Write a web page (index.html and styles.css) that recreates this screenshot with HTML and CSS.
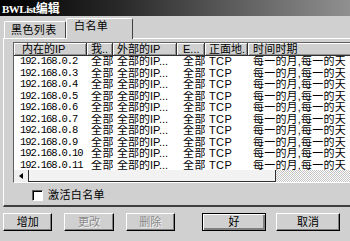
FILE: index.html
```html
<!DOCTYPE html>
<html>
<head>
	<title>BWList编辑</title>
	<link rel="stylesheet" href="styles.css">
</head>
<body>
	<div class="window">
		<div class="titlebar"><span class="latin">BWList</span>编辑</div>

		<div class="tabs">
			<div class="tab">黑色列表</div>
			<div class="tab active">白名单</div>
		</div>

		<div class="panel">
			<div class="list">
				<div class="row head">
					<div class="c1">内在的IP</div>
					<div class="c2">我..</div>
					<div class="c3">外部的IP</div>
					<div class="c4">E...</div>
					<div class="c5">正面地.</div>
					<div class="c6">时间时期</div>
				</div>
				<div class="rows">
					<div class="row"><div class="c1">192.168.0.2</div><div class="c2">全部</div><div class="c3">全部的IP...</div><div class="c4">全部</div><div class="c5">TCP</div><div class="c6">每一的月,每一的天</div></div>
					<div class="row"><div class="c1">192.168.0.3</div><div class="c2">全部</div><div class="c3">全部的IP...</div><div class="c4">全部</div><div class="c5">TCP</div><div class="c6">每一的月,每一的天</div></div>
					<div class="row"><div class="c1">192.168.0.4</div><div class="c2">全部</div><div class="c3">全部的IP...</div><div class="c4">全部</div><div class="c5">TCP</div><div class="c6">每一的月,每一的天</div></div>
					<div class="row"><div class="c1">192.168.0.5</div><div class="c2">全部</div><div class="c3">全部的IP...</div><div class="c4">全部</div><div class="c5">TCP</div><div class="c6">每一的月,每一的天</div></div>
					<div class="row"><div class="c1">192.168.0.6</div><div class="c2">全部</div><div class="c3">全部的IP...</div><div class="c4">全部</div><div class="c5">TCP</div><div class="c6">每一的月,每一的天</div></div>
					<div class="row"><div class="c1">192.168.0.7</div><div class="c2">全部</div><div class="c3">全部的IP...</div><div class="c4">全部</div><div class="c5">TCP</div><div class="c6">每一的月,每一的天</div></div>
					<div class="row"><div class="c1">192.168.0.8</div><div class="c2">全部</div><div class="c3">全部的IP...</div><div class="c4">全部</div><div class="c5">TCP</div><div class="c6">每一的月,每一的天</div></div>
					<div class="row"><div class="c1">192.168.0.9</div><div class="c2">全部</div><div class="c3">全部的IP...</div><div class="c4">全部</div><div class="c5">TCP</div><div class="c6">每一的月,每一的天</div></div>
					<div class="row"><div class="c1">192.168.0.10</div><div class="c2">全部</div><div class="c3">全部的IP...</div><div class="c4">全部</div><div class="c5">TCP</div><div class="c6">每一的月,每一的天</div></div>
					<div class="row"><div class="c1">192.168.0.11</div><div class="c2">全部</div><div class="c3">全部的IP...</div><div class="c4">全部</div><div class="c5">TCP</div><div class="c6">每一的月,每一的天</div></div>
				</div>
				<div class="hscroll">
					<div class="arrow"><span class="tri"></span></div>
					<div class="thumb"></div>
					<div class="track"></div>
				</div>
			</div>
			<label class="check"><span class="box"></span>激活白名单</label>
		</div>

		<div class="buttons">
			<div class="btn">增加</div>
			<div class="btn off">更改</div>
			<div class="btn off">删除</div>
			<div class="btn wide default">好</div>
			<div class="btn wide">取消</div>
		</div>
	</div>
</body>
</html>
```

FILE: styles.css
```css
html, body { margin: 0; width: 350px; height: 241px; overflow: hidden; background: #d0d0d0; }
.window { width: 350px; height: 241px; overflow: hidden; font-family: "Liberation Sans", "Noto Sans CJK SC", sans-serif; font-size: 11px; color: #000; }

.titlebar { height: 16px; line-height: 16px; padding-left: 2px; color: #fff; font-weight: bold; font-size: 12px;
	font-family: "Noto Sans CJK SC", sans-serif;
	background: linear-gradient(to right, #000 0%, #2a2a2a 35%, #5a5a5a 65%, #909090 100%); }
.titlebar .latin { font-family: "Liberation Serif", serif; font-size: 11px; letter-spacing: -0.5px; }

.tabs { display: flex; align-items: flex-end; height: 20px; margin-top: 2px; padding-left: 4px; letter-spacing: 0.4px; }
.tab { position: relative; height: 17px; line-height: 16px; padding-left: 6px; box-sizing: border-box;
	width: 62px; border: 1px solid; border-bottom: 0; border-color: #fff #404040 #404040 #fff;
	border-radius: 2px 2px 0 0; }
.tab.active { height: 21px; width: 67px; padding-left: 7px; line-height: 14px; margin-bottom: -1px;
	background: #d0d0d0; z-index: 1; }

.panel { width: 380px; margin-left: 3px; border-top: 1px solid #fff; border-left: 1px solid #fff;
	border-bottom: 2px solid #404040; padding: 3px 0 4px 9px; }

.list { width: 372px; background: #fff; border: 1px solid; border-color: #606060 #fff #fff #606060; }
.row { display: grid; grid-template-columns: 73px 26px 64px 28px 43px 160px; height: 11.5px; line-height: 11.5px; white-space: nowrap; }
.row > div { overflow: hidden; padding-left: 4px; }
.rows .row { letter-spacing: 0.4px; }
.rows .c1 { font-family: "Liberation Mono", monospace; font-size: 10.5px; letter-spacing: -1.1px; }
.rows .c3 { letter-spacing: 0; }
.row .c1 { padding-left: 6px; }
.row .c4 { padding-left: 6px; }
.row .c6 { padding-left: 5px; letter-spacing: 0.2px; }
.head { height: 13px; line-height: 12px; background: #d0d0d0; }
.head > div { border-right: 1px solid #303030; border-bottom: 1px solid #303030; box-shadow: inset 1px 1px #fff, inset -1px -1px #909090; }
.head .c1 { padding-left: 8px; }
.rows { height: 114px; overflow: hidden; }

.hscroll { display: flex; height: 12px; }
.arrow { width: 14px; background: #efefef; border-right: 1px solid #303030; display: flex; align-items: center; justify-content: center; }
.tri { width: 0; height: 0; border-right: 4px solid #000; border-top: 3px solid transparent; border-bottom: 3px solid transparent; }
.thumb { width: 246px; background: #f2f2f2; border-right: 1px solid #303030; border-bottom: 1px solid #303030; }
.track { flex: 1; background: repeating-conic-gradient(#fff 0 25%, #c4c4c4 0 50%) 0 0 / 2px 2px; }

.check { display: flex; align-items: center; margin: 7px 0 0 19px; line-height: 11px; letter-spacing: 0.4px; }
.box { width: 9px; height: 9px; margin-right: 5px; background: #fff; border: 1px solid; border-color: #606060 #fff #fff #606060;
	box-shadow: inset 1px 1px #000; }

.buttons { display: flex; margin-top: 6px; padding-left: 3px; }
.btn { width: 50px; height: 18px; line-height: 16px; text-align: center; box-sizing: border-box;
	border: 1px solid; border-color: #fff #000 #000 #fff; box-shadow: inset -1px -1px #808080; margin-right: 12px; }
.btn.off { color: #8a8a8a; text-shadow: 1px 1px #f4f4f4; }
.btn:nth-child(3) { margin-right: 27px; }
.btn.wide { width: 65px; margin-right: 10px; }
.btn.default { border-color: #000; box-shadow: inset 1px 1px #fff, inset -2px -2px #808080; }
```
